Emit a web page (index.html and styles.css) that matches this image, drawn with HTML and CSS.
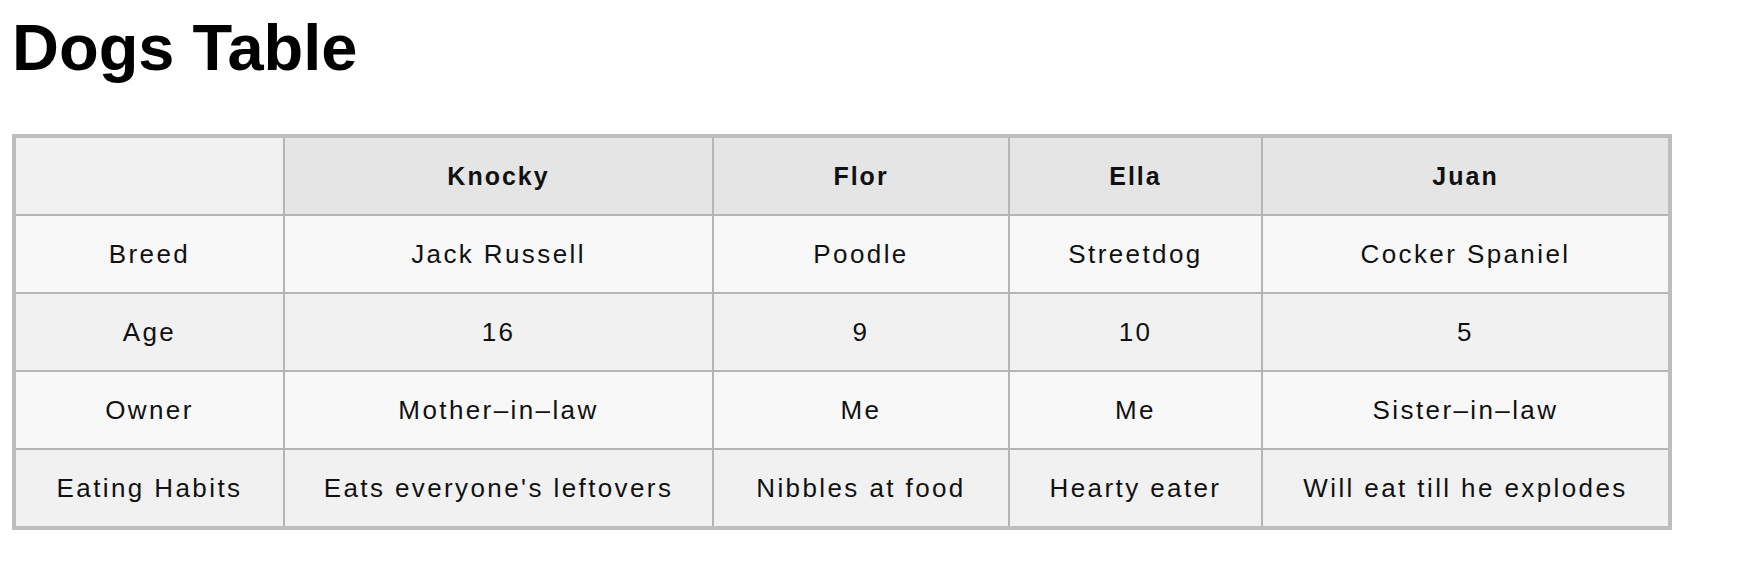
FILE: index.html
```html
<!DOCTYPE html>
<html lang="en">
<head>
<meta charset="utf-8">
<title>Dogs Table</title>
<link rel="stylesheet" href="styles.css">
</head>
<body>
<main class="page">
  <h1 class="title">Dogs Table</h1>
  <div class="dogs" role="table" aria-label="Dogs Table">
    <div class="row head-row" role="row">
      <div class="cell corner" role="columnheader"></div>
      <div class="cell head" role="columnheader">Knocky</div>
      <div class="cell head" role="columnheader">Flor</div>
      <div class="cell head" role="columnheader">Ella</div>
      <div class="cell head" role="columnheader">Juan</div>
    </div>
    <div class="row light" role="row">
      <div class="cell" role="rowheader">Breed</div>
      <div class="cell" role="cell">Jack Russell</div>
      <div class="cell" role="cell">Poodle</div>
      <div class="cell" role="cell">Streetdog</div>
      <div class="cell" role="cell">Cocker Spaniel</div>
    </div>
    <div class="row dark" role="row">
      <div class="cell" role="rowheader">Age</div>
      <div class="cell" role="cell">16</div>
      <div class="cell" role="cell">9</div>
      <div class="cell" role="cell">10</div>
      <div class="cell" role="cell">5</div>
    </div>
    <div class="row light" role="row">
      <div class="cell" role="rowheader">Owner</div>
      <div class="cell" role="cell">Mother&#8211;in&#8211;law</div>
      <div class="cell" role="cell">Me</div>
      <div class="cell" role="cell">Me</div>
      <div class="cell" role="cell">Sister&#8211;in&#8211;law</div>
    </div>
    <div class="row dark" role="row">
      <div class="cell" role="rowheader">Eating Habits</div>
      <div class="cell" role="cell">Eats everyone's leftovers</div>
      <div class="cell" role="cell">Nibbles at food</div>
      <div class="cell" role="cell">Hearty eater</div>
      <div class="cell" role="cell">Will eat till he explodes</div>
    </div>
  </div>
</main>
</body>
</html>
```
FILE: styles.css
```css
html, body {
  margin: 0;
  padding: 0;
  background: #ffffff;
}

body {
  font-family: "Liberation Sans", Arial, sans-serif;
  color: #111111;
}

.page {
  padding: 16px 12px;
}

.title {
  margin: 0 0 54px 0;
  font-size: 65px;
  line-height: 64px;
  font-weight: 700;
  color: #000000;
}

.dogs {
  display: inline-grid;
  grid-template-columns: 267px 427px 294px 251px 405px;
  grid-auto-rows: 76px;
  gap: 2px;
  border: 4px solid #bdbdbd;
  background: #b5b5b5;
}

.row {
  display: contents;
}

.cell {
  display: flex;
  align-items: center;
  justify-content: center;
  font-size: 26px;
  letter-spacing: 2.4px;
  white-space: nowrap;
}

.light .cell {
  background: #f8f8f8;
}

.dark .cell {
  background: #f1f1f1;
}

.corner {
  background: #f1f1f1;
}

.head {
  background: #e5e5e5;
  font-size: 25px;
  font-weight: 700;
  letter-spacing: 2px;
}
```
